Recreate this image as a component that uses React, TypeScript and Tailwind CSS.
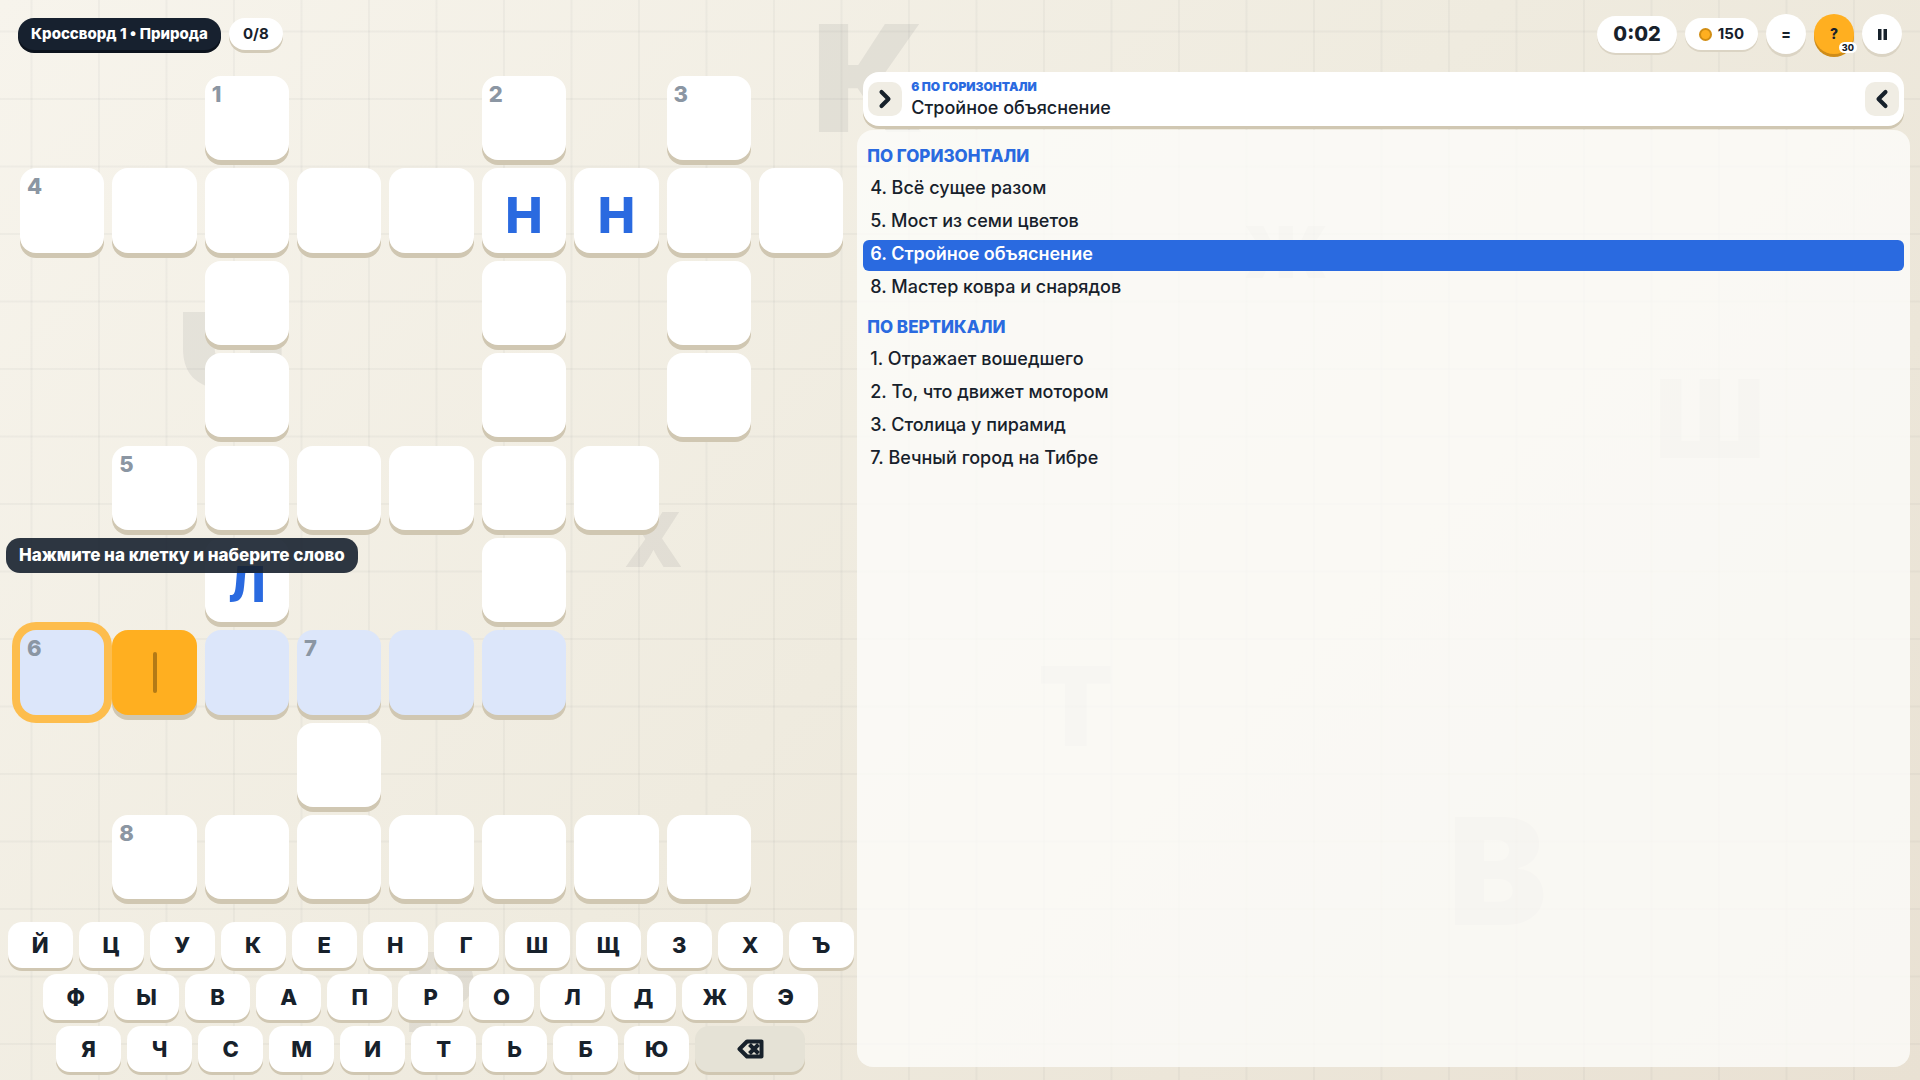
import React from 'react';
import clsx from 'clsx';
import { ChevronLeft, ChevronRight } from 'lucide-react';

interface Clue {
    num: number;
    text: string;
}

const ACROSS: Clue[] = [
    { num: 4, text: 'Всё сущее разом' },
    { num: 5, text: 'Мост из семи цветов' },
    { num: 6, text: 'Стройное объяснение' },
    { num: 8, text: 'Мастер ковра и снарядов' },
];

const DOWN: Clue[] = [
    { num: 1, text: 'Отражает вошедшего' },
    { num: 2, text: 'То, что движет мотором' },
    { num: 3, text: 'Столица у пирамид' },
    { num: 7, text: 'Вечный город на Тибре' },
];

// '.' = no cell, '_' = empty cell, anything else is a filled letter
const BOARD = [
    '.._.._._.',
    '_____НН__',
    '.._.._._.',
    '.._.._._.',
    '.______..',
    '..Л.._...',
    '______...',
    '..._.....',
    '._______.',
];

const NUMBERS: Record<string, number> = {
    '0-2': 1,
    '0-5': 2,
    '0-7': 3,
    '1-0': 4,
    '4-1': 5,
    '6-0': 6,
    '6-3': 7,
    '8-1': 8,
};

const ACTIVE_ROW = 6;
const CURSOR = '6-1';
const FOCUSED = '6-0';

const KEY_ROWS = ['ЙЦУКЕНГШЩЗХЪ', 'ФЫВАПРОЛДЖЭ', 'ЯЧСМИТЬБЮ'];

const FLOATING = [
    { char: 'К', className: 'left-[812px] top-[5px] text-[148px]' },
    { char: 'Ч', className: 'left-[175px] top-[290px] text-[160px]' },
    { char: 'Х', className: 'left-[624px] top-[502px] text-[75px]' },
    { char: 'Р', className: 'left-[404px] top-[937px] text-[110px]' },
    { char: 'Ж', className: 'left-[1244px] top-[216px] text-[72px]' },
    { char: 'Ш', className: 'left-[1655px] top-[365px] text-[108px]' },
    { char: 'Т', className: 'left-[1038px] top-[651px] text-[110px]' },
    { char: 'В', className: 'left-[1448px] top-[798px] text-[148px]' },
];

const Backdrop: React.FC = () => (
    <div aria-hidden="true" className="absolute inset-0 -z-10 overflow-hidden">
        {FLOATING.map(({ char, className }) => (
            <span
                key={char}
                className={clsx('absolute font-black leading-none text-[#17212f]/7', className)}
            >
                {char}
            </span>
        ))}
        <div className="absolute inset-0 bg-[linear-gradient(to_right,#17212f09_2px,transparent_2px),linear-gradient(to_bottom,#17212f09_2px,transparent_2px)] bg-[length:6.25vh_6.25vh] bg-position-[-37px_-37px]" />
    </div>
);

const TopBar: React.FC = () => (
    <header className="flex h-[68px] items-start justify-between px-[18px] pt-[14px]">
        <div className="flex items-start gap-2 pt-1">
            <h1 className="rounded-full bg-[#17212f] px-[13px] text-[15px] leading-8 font-extrabold text-white shadow-[0_3px_0_#0c131d]">
                Кроссворд 1 • Природа
            </h1>
            <div className="rounded-full bg-white px-[14px] text-[15px] leading-8 font-bold shadow-[0_3px_0_#d3cbb8]">0/8</div>
        </div>
        <div className="flex items-center gap-2">
            <div className="rounded-full bg-white px-4 text-xl leading-[37px] font-extrabold shadow-[0_2px_0_#dbd4c4]">0:02</div>
            <div className="flex items-center gap-[6px] rounded-full bg-white px-[14px] text-[15px] leading-8 font-bold shadow-[0_2px_0_#dbd4c4]">
                <span className="size-[13px] rounded-full border-2 border-[#d18d13] bg-[#ffaf20]" />
                150
            </div>
            <button type="button" aria-label="Меню" className="size-10 rounded-full bg-white text-sm font-extrabold shadow-[0_3px_0_#dbd4c4]">
                =
            </button>
            <button type="button" aria-label="Подсказка" className="relative size-10 rounded-full bg-[#ffaf20] text-sm font-extrabold shadow-[0_3px_0_#cf8c18]">
                ?
                <span className="absolute -right-[3px] bottom-px rounded-full bg-white px-[3px] text-[9px] leading-[11px] font-extrabold">30</span>
            </button>
            <button type="button" aria-label="Пауза" className="flex size-10 items-center justify-center rounded-full bg-white shadow-[0_3px_0_#dbd4c4]">
                <svg viewBox="0 0 9 11" className="h-[11px] w-[9px]" fill="currentColor">
                    <rect x="0" width="3.5" height="11" />
                    <rect x="5.5" width="3.5" height="11" />
                </svg>
            </button>
        </div>
    </header>
);

const Board: React.FC = () => (
    <div className="grid grid-cols-9 gap-2 pt-2 pr-[14px] pl-5">
        {BOARD.flatMap((row, r) =>
            row.split('').map((char, c) => {
                const id = `${r}-${c}`;
                if (char === '.') return <div key={id} className="aspect-square" />;
                const number = NUMBERS[id];

                return (
                    <button
                        key={id}
                        type="button"
                        aria-label={`Клетка ${r + 1}, ${c + 1}`}
                        className={clsx(
                            'relative flex aspect-square items-center justify-center rounded-2xl pt-2 text-[50px] leading-none font-extrabold text-[#2a6ae0]',
                            id === CURSOR ? 'bg-[#ffaf20]' : r === ACTIVE_ROW ? 'bg-[#dce6fa]' : 'bg-white',
                            id === FOCUSED
                                ? 'shadow-[0_0_0_8px_#fdbd4d]'
                                : 'shadow-[0_5px_0_#d0c7b2]'
                        )}
                    >
                        {number && (
                            <span className="absolute top-2 left-[7px] text-[22px] leading-5 font-extrabold text-[#8b96a3]">{number}</span>
                        )}
                        {id === CURSOR && <span className="-mt-2 h-[41px] w-1 rounded-sm bg-[#b37a16]" />}
                        {char !== '_' && char}
                    </button>
                );
            })
        )}
    </div>
);

const KEY = 'h-[46px] rounded-[14px] text-[22px] leading-none font-extrabold shadow-[0_3px_0_#d0c7b2]';

const Keyboard: React.FC = () => (
    <div className="flex flex-col gap-[6px] pt-5 pb-2">
        {KEY_ROWS.map((row, i) => (
            <div key={row} className="flex justify-center gap-[6px] pl-1">
                {row.split('').map((char) => (
                    <button key={char} type="button" className={clsx(KEY, 'w-[65px] bg-white')}>
                        {char}
                    </button>
                ))}
                {i === KEY_ROWS.length - 1 && (
                    <button type="button" aria-label="Стереть" className={clsx(KEY, 'flex w-[110px] items-center justify-center bg-[#e5e2d6]')}>
                        <svg viewBox="0 0 27 20" className="h-5 w-[27px]" fill="none" stroke="currentColor">
                            <path d="M10 2.5h14.5v15H10L2.5 10z" strokeWidth="4" strokeLinejoin="round" />
                            <path d="M12.5 5.5l9 9M21.5 5.5l-9 9" strokeWidth="4" />
                        </svg>
                    </button>
                )}
            </div>
        ))}
    </div>
);

interface ClueListProps {
    title: string;
    clues: Clue[];
    active?: number;
}

const ClueList: React.FC<ClueListProps> = ({ title, clues, active }) => (
    <section>
        <h2 className="mb-2 pl-1 text-[17px] leading-5 font-extrabold text-[#2a6ae0] uppercase">{title}</h2>
        <ol className="flex flex-col gap-[2px]">
            {clues.map(({ num, text }) => (
                <li key={num}>
                    <button
                        type="button"
                        className={clsx(
                            'block w-full rounded-md px-[7px] pt-1 pb-[7px] text-left text-lg leading-5',
                            num === active ? 'bg-[#2a6ae0] font-semibold text-white' : 'font-medium'
                        )}
                    >
                        {num}. {text}
                    </button>
                </li>
            ))}
        </ol>
    </section>
);

const CLUE_BUTTON = 'flex size-[34px] items-center justify-center rounded-[10px] bg-[#f0ede4]';

const CluePanel: React.FC = () => (
    <aside className="flex min-w-0 flex-1 flex-col pr-[10px] pb-[13px]">
        <div className="mx-[6px] mt-1 flex h-[54px] items-center rounded-2xl bg-white px-[5px] shadow-[0_3px_0_#d0c7b2]">
            <button type="button" aria-label="Предыдущее слово" className={CLUE_BUTTON}>
                <ChevronRight size={28} strokeWidth={3.5} />
            </button>
            <div className="flex-1 pb-px pl-[9px]">
                <div className="text-xs leading-4 font-black text-[#2a6ae0] uppercase">6 по горизонтали</div>
                <div className="pt-[3px] text-lg leading-5 font-medium">Стройное объяснение</div>
            </div>
            <button type="button" aria-label="Следующее слово" className={CLUE_BUTTON}>
                <ChevronLeft size={28} strokeWidth={3.5} />
            </button>
        </div>
        <div className="mt-1 flex flex-1 flex-col gap-[13px] rounded-2xl bg-[#fdfdfa]/80 px-[6px] pt-4">
            <ClueList title="По горизонтали" clues={ACROSS} active={6} />
            <ClueList title="По вертикали" clues={DOWN} />
        </div>
    </aside>
);

export default function App() {
    return (
        <div className="relative isolate flex min-h-screen flex-col bg-[linear-gradient(135deg,#f7f4ec,#efebdf_50%,#e9e1d3)] font-['Inter','Noto_Sans',sans-serif] text-[#17212b]">
            <Backdrop />
            <TopBar />
            <main className="flex flex-1">
                <div className="flex w-[44.65%] flex-col justify-between">
                    <Board />
                    <Keyboard />
                </div>
                <CluePanel />
            </main>
            {/* hint toast floats over the board */}
            <div
                role="status"
                className="absolute top-[538px] left-[6px] rounded-[14px] bg-[#17212f]/90 px-[13px] text-[17px] leading-[35px] font-extrabold text-white"
            >
                Нажмите на клетку и наберите слово
            </div>
        </div>
    );
}
